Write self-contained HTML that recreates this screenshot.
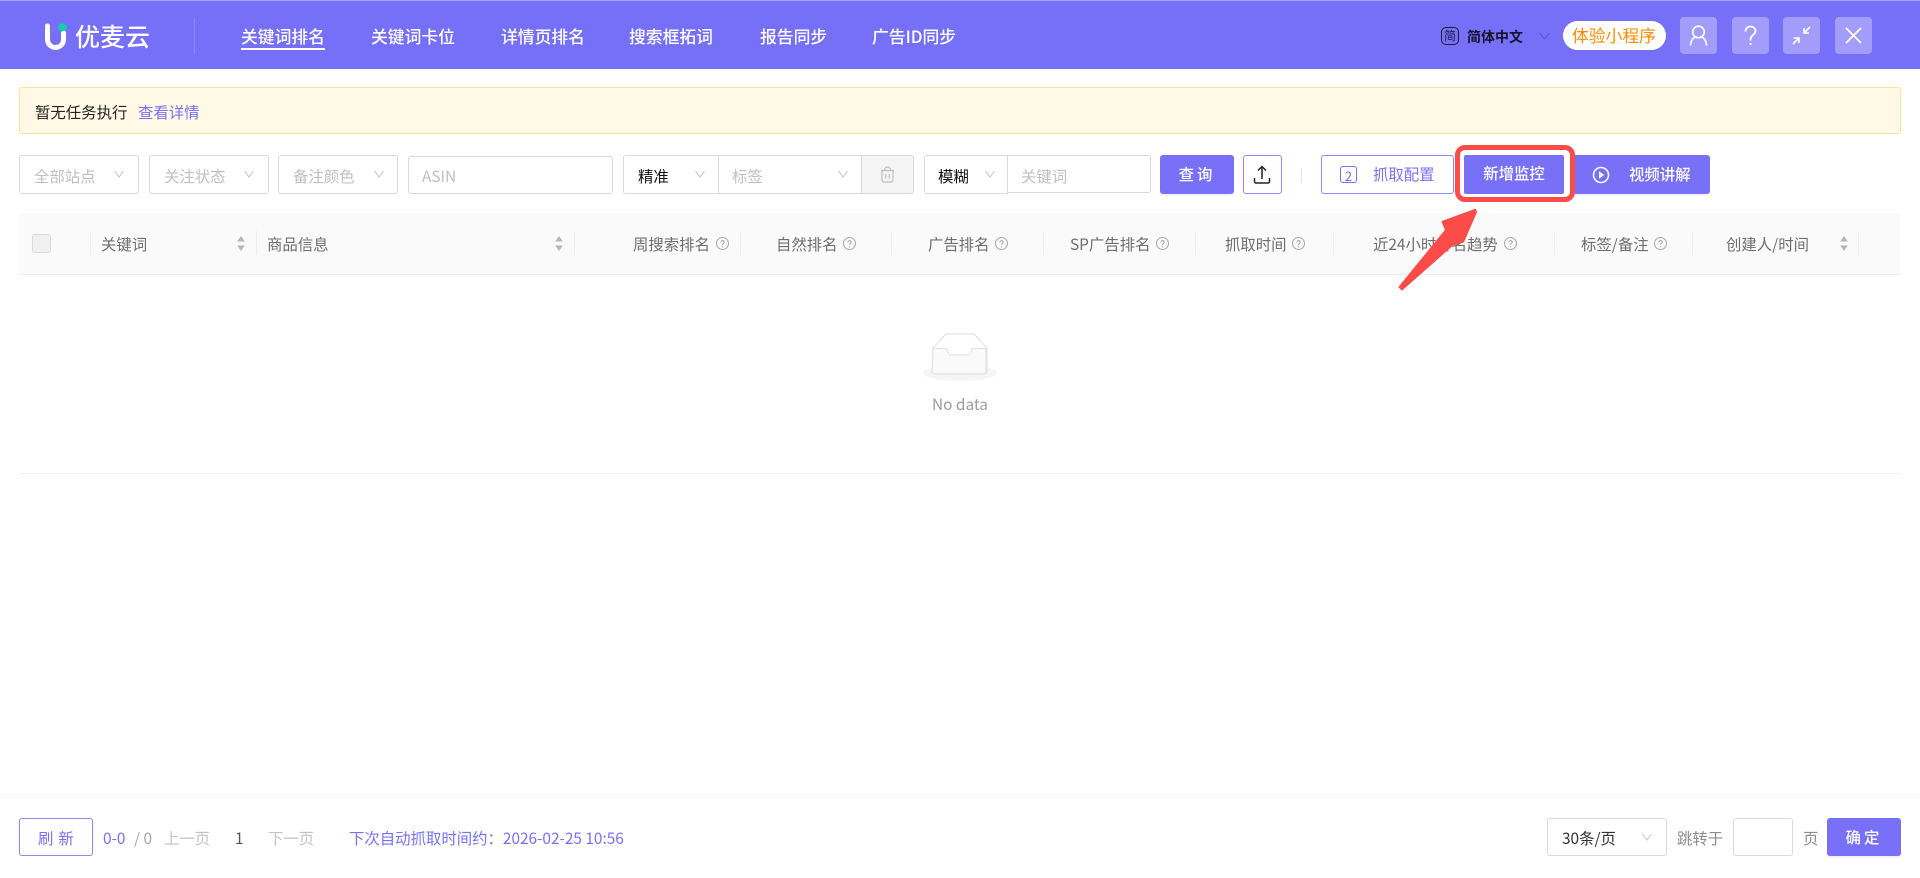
<!DOCTYPE html>
<html lang="zh-CN">
<head>
<meta charset="utf-8">
<title>优麦云</title>
<style>
*{box-sizing:border-box;margin:0;padding:0}
html,body{width:1920px;height:878px;overflow:hidden;background:#fff}
body{font-family:"Noto Sans CJK SC","Liberation Sans",sans-serif;position:relative;font-size:15.4px;color:#333}
.a{position:absolute}
.t{position:absolute;white-space:nowrap;line-height:20px}
.box{position:absolute;background:#fff;border:1px solid #d9d9d9;border-radius:3px}
.ph{color:#bfbfbf}
.nav{position:absolute;top:24px;line-height:24px;font-size:16.8px;color:#fff;white-space:nowrap;font-weight:500}
.hbtn{position:absolute;top:17px;width:37px;height:37px;border-radius:4px;background:#a29cfa}
.hbtn svg{position:absolute;left:0;top:0}
.prim{position:absolute;background:#7871f8;border-radius:3px;color:#fff;text-align:center;box-shadow:0 2px 0 rgba(120,113,248,.08)}
.sep{position:absolute;width:1px;background:#eeeeee;top:231px;height:24px}
.th{position:absolute;top:234px;line-height:20px;font-size:15.4px;color:#6e6e6e;white-space:nowrap}
.chev{position:absolute}
</style>
</head>
<body>
<!-- header -->
<div class="a" style="left:0;top:0;width:1920px;height:69px;background:#7670f8"></div>
<div class="a" style="left:0;top:0;width:1920px;height:1px;background:#a9a5f8"></div>
<svg class="a" style="left:44px;top:22px" width="24" height="28" viewBox="0 0 24 28">
<path d="M3.5 4v13.5a8 8 0 0 0 16 0V11" fill="none" stroke="#fff" stroke-width="5" stroke-linecap="round"/>
<path d="M18.500 1l4 2.400v3.800l-4 2.300-4-2.300V3.400z" fill="#0fd3a4"/>
</svg>
<div class="t" style="left:75px;top:21px;line-height:30px;font-size:25px;color:#fff;font-weight:500">优麦云</div>
<div class="a" style="left:194px;top:18px;width:1px;height:36px;background:#8f8af8"></div>
<div class="nav" style="left:241px">关键词排名</div>
<div class="a" style="left:241px;top:48px;width:84px;height:2px;background:#fff"></div>
<div class="nav" style="left:371px">关键词卡位</div>
<div class="nav" style="left:501px">详情页排名</div>
<div class="nav" style="left:629px">搜索框拓词</div>
<div class="nav" style="left:760px">报告同步</div>
<div class="nav" style="left:872px">广告ID同步</div>

<div class="a" style="left:1441px;top:27px;width:18px;height:18px;border:1.5px solid #1c1a3a;border-radius:5px"></div>
<div class="t" style="left:1444px;top:27px;line-height:18px;font-size:12px;color:#1c1a3a">简</div>
<div class="t" style="left:1467px;top:27px;line-height:20px;font-size:14px;font-weight:700;color:#14122e">简体中文</div>
<svg class="chev" style="left:1539px;top:32px" width="11" height="8" viewBox="0 0 11 8"><path d="M.5 1l5 6 5-6" fill="none" stroke="#5b56c4" stroke-width="1"/></svg>
<div class="a" style="left:1563px;top:21px;width:103px;height:29px;border-radius:15px;background:#fff"></div>
<div class="t" style="left:1572px;top:23px;line-height:24px;font-size:16.8px;color:#ff8a00">体验小程序</div>

<div class="hbtn" style="left:1680px"><svg width="37" height="37" viewBox="0 0 37 37" fill="none" stroke="#fff" stroke-width="1.6"><circle cx="18.5" cy="15" r="5.8"/><path d="M10.5 28c.5-5 3-7.5 5.5-8.3M26.5 28c-.5-5-3-7.5-5.5-8.3" stroke-linecap="round"/></svg></div>
<div class="hbtn" style="left:1732px"><svg width="37" height="37" viewBox="0 0 37 37" fill="none" stroke="#fff" stroke-width="1.8"><path d="M13.5 14.5c0-3 2.200-5 5-5s5 2 5 4.600c0 3.600-5 4-5 8.400v1"/><circle cx="18.500" cy="27" r="1.100" fill="#fff" stroke="none"/></svg></div>
<div class="hbtn" style="left:1783px"><svg width="37" height="37" viewBox="0 0 37 37" fill="none" stroke="#fff" stroke-width="1.600"><path d="M21 16l6-6M21 11v5h5M16 21l-6 6M10.500 21H16v5"/></svg></div>
<div class="hbtn" style="left:1835px"><svg width="37" height="37" viewBox="0 0 37 37" fill="none" stroke="#fff" stroke-width="1.800"><path d="M11 11l15 15M26 11L11 26"/></svg></div>

<!-- alert -->
<div class="a" style="left:19px;top:87px;width:1882px;height:47px;background:#fff9e6;border:1px solid #f8e5a0;border-radius:3px"></div>
<div class="t" style="left:35px;top:102px;color:#222">暂无任务执行</div>
<div class="t" style="left:138px;top:102px;color:#7871f8">查看详情</div>

<!-- filters -->
<div class="box" style="left:19px;top:155px;width:120px;height:39px"></div>
<div class="t ph" style="left:34px;top:166px">全部站点</div>
<div class="box" style="left:149px;top:155px;width:120px;height:39px"></div>
<div class="t ph" style="left:164px;top:166px">关注状态</div>
<div class="box" style="left:278px;top:155px;width:120px;height:39px"></div>
<div class="t ph" style="left:293px;top:166px">备注颜色</div>
<div class="box" style="left:408px;top:156px;width:205px;height:38px"></div>
<div class="t ph" style="left:422px;top:166px">ASIN</div>
<svg class="chev" style="left:114px;top:170px" width="10" height="8"><path d="M.5 1l4.500 6 4.500-6" fill="none" stroke="#c4c4c4"/></svg>
<svg class="chev" style="left:244px;top:170px" width="10" height="8"><path d="M.5 1l4.500 6 4.500-6" fill="none" stroke="#c4c4c4"/></svg>
<svg class="chev" style="left:374px;top:170px" width="10" height="8"><path d="M.5 1l4.500 6 4.500-6" fill="none" stroke="#c4c4c4"/></svg>

<div class="box" style="left:623px;top:155px;width:96px;height:39px;border-radius:3px 0 0 3px"></div>
<div class="t" style="left:638px;top:166px;color:#111">精准</div>
<svg class="chev" style="left:695px;top:170px" width="10" height="8"><path d="M.5 1l4.500 6 4.500-6" fill="none" stroke="#c4c4c4"/></svg>
<div class="box" style="left:718px;top:155px;width:144px;height:39px;border-radius:0"></div>
<div class="t ph" style="left:732px;top:166px">标签</div>
<svg class="chev" style="left:838px;top:170px" width="10" height="8"><path d="M.5 1l4.500 6 4.500-6" fill="none" stroke="#c4c4c4"/></svg>
<div class="box" style="left:861px;top:155px;width:53px;height:39px;background:#f5f5f5;border-radius:0 3px 3px 0"></div>
<svg class="a" style="left:880px;top:166px" width="15" height="17" viewBox="0 0 15 17" fill="none" stroke="#bdbdbd" stroke-width="1.200"><path d="M1 4.500h13M4.500 4.500c0-2 1.200-3.500 3-3.500s3 1.500 3 3.500M2 4.500V14a2 2 0 0 0 2 2h7a2 2 0 0 0 2-2V4.500M5.800 8v4.500M9.200 8v4.500"/></svg>

<div class="box" style="left:924px;top:155px;width:84px;height:39px;border-radius:3px 0 0 3px;z-index:2"></div>
<div class="t" style="left:938px;top:166px;color:#111;z-index:3">模糊</div>
<svg class="chev" style="left:985px;top:170px;z-index:3" width="10" height="8"><path d="M.5 1l4.500 6 4.500-6" fill="none" stroke="#c4c4c4"/></svg>
<div class="box" style="left:1007px;top:155px;width:144px;height:38px;border-radius:0 3px 3px 0"></div>
<div class="t ph" style="left:1021px;top:166px">关键词</div>

<div class="prim" style="left:1160px;top:155px;width:74px;height:39px;line-height:39px;letter-spacing:3px;font-weight:500">查询</div>
<div class="box" style="left:1243px;top:155px;width:39px;height:39px;border-color:#8f89f8"></div>
<svg class="a" style="left:1252px;top:165px" width="20" height="20" viewBox="0 0 20 20" fill="none" stroke="#222" stroke-width="1.500"><path d="M10 14V2M6 5.500L10 1.500l4 4M2.500 13v3.500a1.500 1.500 0 0 0 1.500 1.500h12a1.500 1.500 0 0 0 1.500-1.500V13"/></svg>
<div class="a" style="left:1301px;top:168px;width:1px;height:15px;background:#e4e4e4"></div>

<div class="box" style="left:1321px;top:155px;width:133px;height:39px;border-color:#8f89f8"></div>
<div class="a" style="left:1340px;top:166px;width:17px;height:17px;border:1px solid #7871f8;border-radius:3px;text-align:center;line-height:17px;font-size:13px;color:#7871f8">2</div>
<div class="t" style="left:1373px;top:164px;color:#7871f8">抓取配置</div>

<div class="prim" style="left:1570px;top:155px;width:140px;height:39px"></div>
<svg class="a" style="left:1592px;top:166px" width="18" height="18" viewBox="0 0 18 18"><circle cx="9" cy="9" r="7.500" fill="none" stroke="#fff" stroke-width="1.500"/><path d="M7 5.200l5.200 3.800L7 12.800z" fill="#fff"/></svg>
<div class="t" style="left:1629px;top:164px;color:#fff;font-weight:500">视频讲解</div>

<div class="a" style="left:1455px;top:145px;width:120px;height:57px;border:5.500px solid #fb4c4a;border-radius:10px;background:#fff"></div>
<div class="prim" style="left:1464px;top:155px;width:100px;height:39px;line-height:37px;font-weight:500;border-radius:2px;box-shadow:none">新增监控</div>

<!-- table header -->
<div class="a" style="left:19px;top:213px;width:1881px;height:62px;background:#fafafa;border-bottom:1px solid #eeeeee"></div>
<div class="a" style="left:32px;top:234px;width:19px;height:19px;background:#f0f0f0;border:1px solid #d9d9d9;border-radius:3px"></div>
<div class="sep" style="left:90px"></div>
<div class="th" style="left:101px">关键词</div>
<svg class="a" style="left:237px;top:236px" width="8" height="15"><path d="M4 0l3.800 5.500H.2z" fill="#b5b5b5"/><path d="M4 15l3.800-5.500H.2z" fill="#b5b5b5"/></svg>
<div class="sep" style="left:256px"></div>
<div class="th" style="left:267px">商品信息</div>
<svg class="a" style="left:555px;top:236px" width="8" height="15"><path d="M4 0l3.800 5.500H.2z" fill="#b5b5b5"/><path d="M4 15l3.800-5.500H.2z" fill="#b5b5b5"/></svg>
<div class="sep" style="left:574px"></div>
<div class="th" style="left:633px">周搜索排名</div>
<div class="sep" style="left:740px"></div>
<div class="th" style="left:776px">自然排名</div>
<div class="sep" style="left:891px"></div>
<div class="th" style="left:928px">广告排名</div>
<div class="sep" style="left:1043px"></div>
<div class="th" style="left:1070px">SP广告排名</div>
<div class="sep" style="left:1195px"></div>
<div class="th" style="left:1225px">抓取时间</div>
<div class="sep" style="left:1333px"></div>
<div class="th" style="left:1373px">近24小时排名趋势</div>
<div class="sep" style="left:1554px"></div>
<div class="th" style="left:1581px">标签/备注</div>
<div class="sep" style="left:1692px"></div>
<div class="th" style="left:1726px">创建人/时间</div>
<svg class="a" style="left:1840px;top:236px" width="8" height="15"><path d="M4 0l3.800 5.500H.2z" fill="#b5b5b5"/><path d="M4 15l3.800-5.500H.2z" fill="#b5b5b5"/></svg>
<div class="sep" style="left:1858px"></div>

<!-- help icons -->
<svg width="0" height="0" style="position:absolute"><defs><g id="q"><circle cx="6.500" cy="6.500" r="6" fill="none" stroke="#a8a8a8"/><path d="M4.800 5.300c0-1 .8-1.700 1.700-1.700s1.700.6 1.700 1.500c0 1.200-1.700 1.300-1.700 2.800" fill="none" stroke="#a8a8a8"/><circle cx="6.500" cy="9.700" r=".6" fill="#a8a8a8"/></g></defs></svg>
<svg class="a" style="left:716px;top:237px" width="13" height="13"><use href="#q"/></svg>
<svg class="a" style="left:843px;top:237px" width="13" height="13"><use href="#q"/></svg>
<svg class="a" style="left:995px;top:237px" width="13" height="13"><use href="#q"/></svg>
<svg class="a" style="left:1156px;top:237px" width="13" height="13"><use href="#q"/></svg>
<svg class="a" style="left:1292px;top:237px" width="13" height="13"><use href="#q"/></svg>
<svg class="a" style="left:1504px;top:237px" width="13" height="13"><use href="#q"/></svg>
<svg class="a" style="left:1654px;top:237px" width="13" height="13"><use href="#q"/></svg>

<!-- arrow -->
<svg class="a" style="left:1390px;top:200px" width="100" height="100" viewBox="1390 200 100 100"><path d="M1475.500 209.200L1442 221.500l3.500 8.500-46.500 57 3 3 51-45 10.500-3 13-30z" fill="#fb4c4a" stroke="#fb4c4a" stroke-width="1" stroke-linejoin="round"/></svg>

<!-- empty -->
<svg class="a" style="left:920px;top:330px" width="80" height="54" viewBox="920 330 80 54">
<ellipse cx="960" cy="373" rx="37" ry="8" fill="#f5f5f5"/>
<path d="M946 334h28l13 14v23a3 3 0 0 1-3 3h-48a3 3 0 0 1-3-3v-23z" fill="#fff" stroke="#e3e3e3" stroke-width="1.200"/>
<path d="M933 350a1.500 1.500 0 0 1 1.500-1.500h11c3 0 2 6.500 5 6.500h18c3 0 2-6.500 5-6.500h11a1.500 1.500 0 0 1 1.500 1.500v21a3 3 0 0 1-3 3h-48a3 3 0 0 1-3-3z" fill="#fafafa" stroke="#e3e3e3" stroke-width="1.200"/>
</svg>
<div class="t" style="left:932px;top:394px;font-size:15.4px;color:#9c9c9c">No data</div>
<div class="a" style="left:19px;top:473px;width:1881px;height:1px;background:#efefef"></div>

<!-- footer -->
<div class="a" style="left:0;top:794px;width:1920px;height:1px;background:#f6f6f6"></div>
<div class="box" style="left:19px;top:818px;width:74px;height:38px;border-color:#8f89f8"></div>
<div class="t" style="left:38px;top:828px;color:#7871f8;letter-spacing:5px">刷新</div>
<div class="t" style="left:103px;top:828px;color:#7871f8">0-0</div>
<div class="t" style="left:134px;top:828px;color:#a6a6a6">/ 0</div>
<div class="t" style="left:164px;top:828px;color:#c4c4c4">上一页</div>
<div class="t" style="left:235px;top:828px;color:#555">1</div>
<div class="t" style="left:268px;top:828px;color:#c4c4c4">下一页</div>
<div class="t" style="left:349px;top:828px;color:#7871f8">下次自动抓取时间约：2026-02-25 10:56</div>

<div class="box" style="left:1547px;top:818px;width:120px;height:38px"></div>
<div class="t" style="left:1562px;top:828px;color:#333">30条/页</div>
<svg class="chev" style="left:1642px;top:833px" width="10" height="8"><path d="M.5 1l4.500 6 4.500-6" fill="none" stroke="#c4c4c4"/></svg>
<div class="t" style="left:1677px;top:828px;color:#8c8c8c">跳转于</div>
<div class="box" style="left:1733px;top:818px;width:60px;height:38px"></div>
<div class="t" style="left:1803px;top:828px;color:#8c8c8c">页</div>
<div class="prim" style="left:1827px;top:818px;width:74px;height:38px;line-height:38px;letter-spacing:3px;font-weight:500">确定</div>
</body>
</html>
